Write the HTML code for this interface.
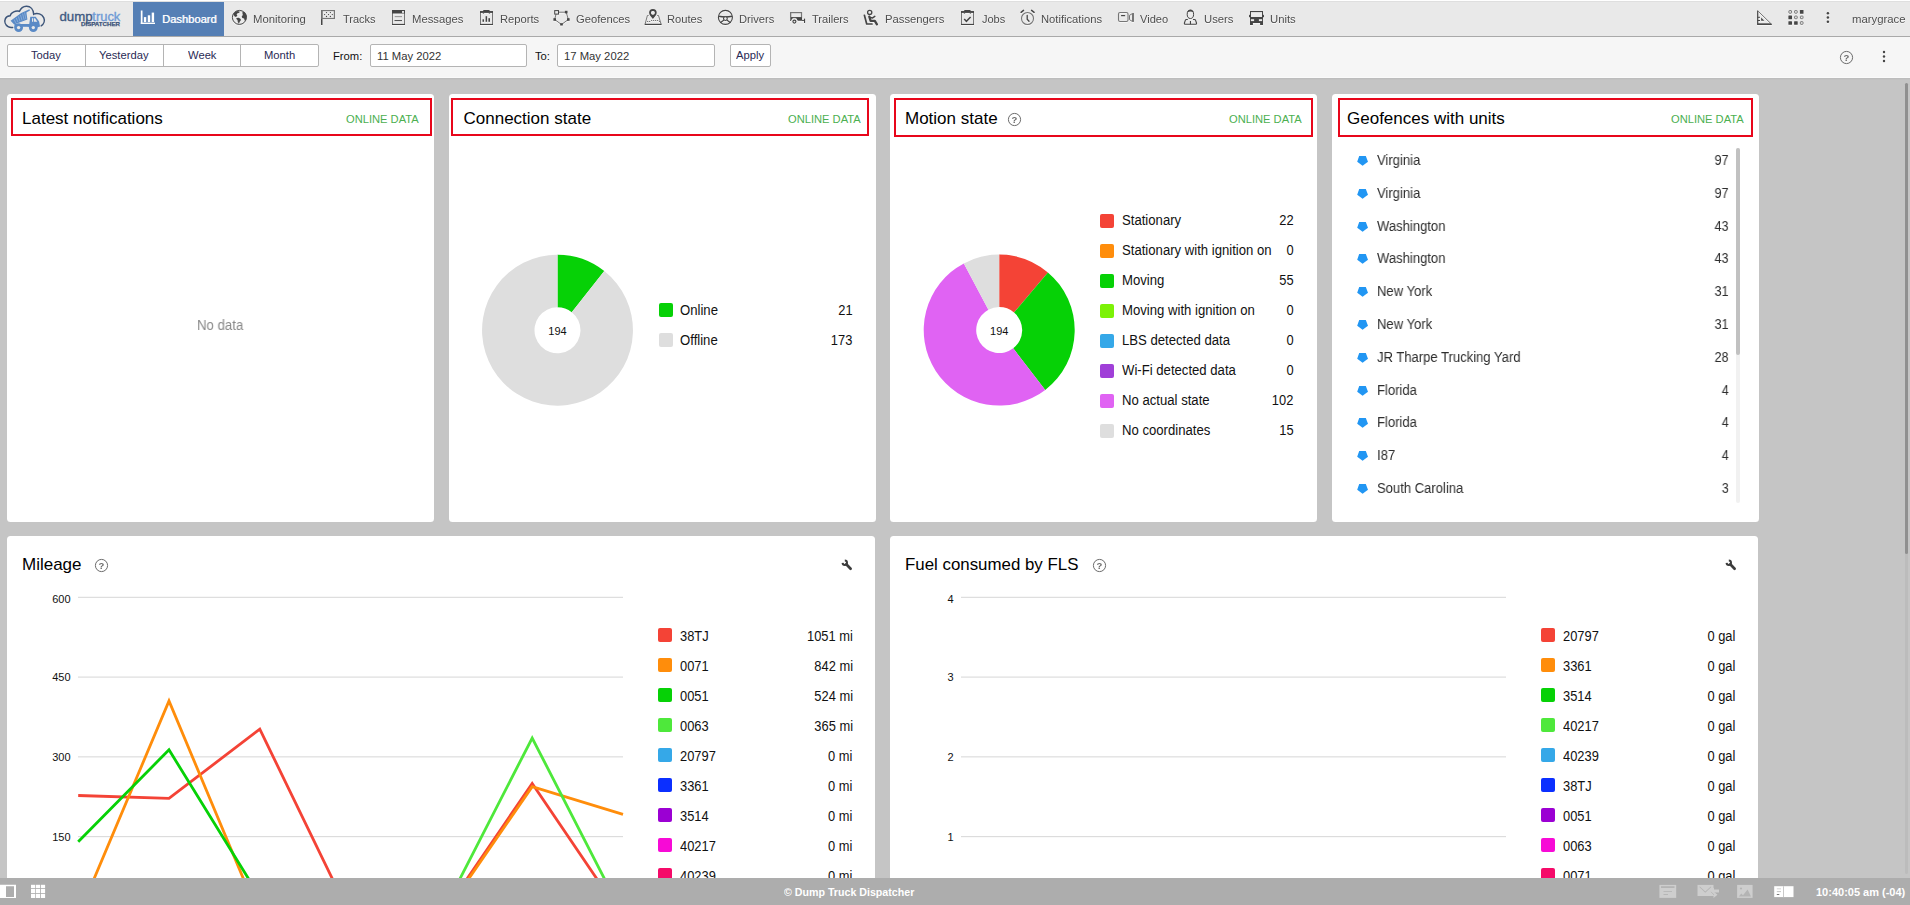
<!DOCTYPE html>
<html lang="en">
<head>
<meta charset="utf-8">
<title>Dump Truck Dispatcher</title>
<style>
html,body,h2{margin:0;padding:0}
h2{font-weight:normal}
body{width:1910px;height:905px;overflow:hidden;position:relative;background:#c5c5c5;font-family:"Liberation Sans",Arial,sans-serif}
#nav{position:absolute;left:0;top:0;width:1910px;height:36px;background:#e9e9e9;border-bottom:1px solid #a9a9a9;box-shadow:inset 0 1px 0 #fff,inset 0 2px 0 #dfdfdf}
#tb{position:absolute;left:0;top:37px;width:1910px;height:41px;background:#f6f6f6;box-shadow:inset 0 -1px 0 #fafafa}
#main{position:absolute;left:0;top:78px;width:1910px;height:800px;overflow:hidden;box-shadow:inset 0 1px 0 #bdbdbd,inset 0 2px 0 #c2c2c2}
#ft{position:absolute;left:0;top:878px;width:1910px;height:27px;background:#adadad}
#tb>*{margin-top:-37px}
#main>*{margin-top:-78px}
#ft>*{margin-top:-878px}
.b{position:absolute;display:block;box-sizing:border-box}
.t{position:absolute;white-space:nowrap;line-height:1;transform-origin:0 0}
.card{background:#fff;border-radius:3.5px}
.red{border:2px solid #e8061b}
.seg,.inp{background:#fff;border:1px solid #b4b4b4;border-radius:2px}
.sq{width:14px;height:14px;border-radius:2px}
svg text{font-family:"Liberation Sans",Arial,sans-serif}
</style>
</head>
<body>
<nav id="nav">
<svg class="b" style="left:0;top:0" width="130" height="36" viewBox="0 0 130 36"><path d="M12.700 27.400c-1.500.3-3.200.1-4.600-.8-2.900-1.800-3.900-5.300-2.700-8 .8-1.800 2.600-2.700 4.700-2.900 .9-3.300 5.600-5.500 9.400-4.400 1.200-3 3.800-5 6.900-5.100 4.200-.1 7 3.300 7.300 8 3.600-1.900 8.300 0 10 3.400 1.400 2.900.3 6.300-2.500 8.200" fill="none" stroke="#3d5579" stroke-width="1.500" stroke-linecap="round"/><g fill="#5a8ac6"><path d="M10.600 20.800l10.600-7.900 8.200-3.600.6 1.300-3.600 1.900 1 7-13.300 5.100z"/><path d="M30.300 16.800h5.400l3.400 4.700 1 5-2.200.8h-7.200l-3.800-1.300 2.200-1z"/><path d="M14.500 24h16.500v2.800h-16.500z"/><circle cx="18.600" cy="27.600" r="4.400"/><circle cx="33.300" cy="27.600" r="4.400"/></g><g fill="#e9e9e9"><circle cx="18.600" cy="27.600" r="1.700"/><circle cx="33.300" cy="27.600" r="1.700"/><path d="M32 18.200h1.100v3.500h-1.100zM33.900 18.200h1.100l2.300 3.500h-3.400z"/><path d="M19.300 23.600l7.300-2.300.1 2.500z" opacity=".85"/></g><g stroke="#a9c4e6" stroke-width=".7" opacity=".8"><path d="M14.200 19.500l1.500 3.300M16.300 18l1.600 4.100M18.400 16.500l1.600 4.800M20.500 15l1.600 5.500M22.600 13.600l1.500 6.100M24.600 12.600l1.300 6.500"/></g><text x="59.400" y="20.700" font-size="13" fill="#3f5a82" stroke="#3f5a82" stroke-width=".35" textLength="33.200" lengthAdjust="spacingAndGlyphs">dump</text><text x="92.300" y="20.700" font-size="13" fill="#6f9bd6" stroke="#6f9bd6" stroke-width=".35" textLength="28" lengthAdjust="spacingAndGlyphs">truck</text><text x="81" y="26.250" font-size="5.700" font-weight="bold" fill="#3b5278" stroke="#3b5278" stroke-width=".25" textLength="39" lengthAdjust="spacingAndGlyphs">DISPATCHER</text></svg>
<div class="b" style="left:133px;top:2px;width:91px;height:34px;background:#557fb5;"></div>
<svg class="b" style="left:0;top:0" width="1910" height="36" viewBox="0 0 1910 36"><g fill="#fff"><rect x="140.800" y="10.500" width="1.700" height="13.500"/><rect x="140.800" y="22.600" width="14.200" height="1.400"/><rect x="143.900" y="17.100" width="2.300" height="5"/><rect x="147.800" y="15.300" width="2.400" height="6.800"/><rect x="151.700" y="12.600" width="2.400" height="9.500"/></g><g transform="translate(0 1)" opacity=".6"><circle cx="239.400" cy="17.400" r="7" fill="none" stroke="#fff" stroke-width="1"/><path fill="#fff" d="M233.300 14.600c.8-1.800 2.200-3 3.700-3.600l2.700.6-.4 1.200-1.800.4-1 1.400.9.700-1.300 1.600-1.400-.3-.8-1.300zM236.400 18l2.300-.3 1.700 1 .6 1.300-1.300 1.700-.7 2-1.200-1.700-.3-1.900-1.100-1.100zM242.300 12.300l1.700-.6c1.500 1 2.500 2.600 2.800 4.500l-.6 3.400-1.500 1.100-.6-2.300-1.800-.3-.6-1.700 1.100-1.500z"/><rect x="321" y="10" width="1.500" height="15" fill="#fff"/><rect x="321.700" y="10.600" width="12.700" height="7.900" fill="none" stroke="#fff" stroke-width="1.200"/><g fill="#fff"><circle cx="326.5" cy="12.6" r=".65"/><circle cx="330.4" cy="12.6" r=".65"/><circle cx="324.6" cy="14.6" r=".65"/><circle cx="328.5" cy="14.6" r=".65"/><circle cx="332.3" cy="14.6" r=".65"/><circle cx="326.5" cy="16.5" r=".65"/><circle cx="330.4" cy="16.5" r=".65"/></g><rect x="392.500" y="10.500" width="12" height="14" fill="none" stroke="#fff" stroke-width="1"/><rect x="392" y="10" width="13" height="3.500" fill="#fff"/><rect x="402" y="11.100" width="2" height="1.700" fill="#fff"/><rect x="392" y="23.900" width="13" height="1.100" fill="#fff"/><rect x="394.700" y="16.200" width="7.300" height="1" fill="#fff"/><rect x="394.500" y="20.100" width="7.500" height="1" fill="#fff"/><rect x="480.5" y="11.600" width="12" height="12.900" fill="none" stroke="#fff" stroke-width="1"/><rect x="480" y="11.100" width="13" height="1.800" fill="#fff"/><rect x="483.1" y="9.900" width="6.600" height="2.200" rx=".8" fill="#fff"/><path d="M482.4 12.900h2l-1 .8zM488.4 12.900h2l-1 .8z" fill="#fff"/><rect x="480" y="23.900" width="13" height="1.100" fill="#fff"/><g fill="#fff"><rect x="482.500" y="19.300" width="1.500" height="2.500"/><rect x="485.600" y="16.200" width="1.500" height="5.600"/><rect x="488.400" y="18.200" width="1.600" height="3.600"/></g><path d="M556.500 12.200H566.200L568.300 19.500 561.500 24.500 554.700 19.500Z" fill="none" stroke="#fff" stroke-width="1"/><rect x="554.700" y="10.600" width="3.800" height="3.500" fill="none" stroke="#fff" stroke-width="1"/><g fill="#fff"><rect x="564.900" y="10.800" width="2.600" height="2.600"/><rect x="553.400" y="18.200" width="2.600" height="2.600"/><rect x="567" y="18.200" width="2.600" height="2.600"/><rect x="560.200" y="23.200" width="2.600" height="2.300"/></g><path d="M648.600 15.500h-1.200l-2.400 9h16.200l-2.700-9h-1.300" fill="none" stroke="#fff" stroke-width="1"/><rect x="644.800" y="23.800" width="16.600" height="1.200" fill="#fff"/><path d="M647 21.500h3.200M651 20.500h7.300M659 21.500h1" stroke="#fff" stroke-width="1" stroke-dasharray="1.200 .8" fill="none"/><path fill="#fff" fill-rule="evenodd" d="M652.900 9a3.800 3.800 0 0 1 3.800 3.800c0 2.300-2.300 4.200-3.800 6.200-1.500-2-3.800-3.900-3.800-6.200A3.800 3.800 0 0 1 652.900 9zm0 1.900a1.900 1.900 0 1 0 0 3.800 1.900 1.900 0 0 0 0-3.800z"/><circle cx="652.900" cy="12.800" r="1.700" fill="none"/><circle cx="725.400" cy="17.400" r="7" fill="none" stroke="#fff" stroke-width="1.100"/><path d="M718.400 16.200c2.300.5 4.600.8 7 .8s4.700-.3 7-.8" fill="none" stroke="#fff" stroke-width="1.600"/><circle cx="725.400" cy="18.600" r="1.900" fill="none" stroke="#fff" stroke-width="1.100"/><path d="M724 20l-3.700 2.700M726.800 20l3.700 2.700" stroke="#fff" stroke-width="1.100" fill="none"/><rect x="790.600" y="12.600" width="10.900" height="5" fill="none" stroke="#fff" stroke-width="1.200"/><path fill="#fff" d="M790 17.200h12v3.500h-3.800c-.7 0-1-.6-1.300-1.400-.4-1-1.200-1.500-2.500-1.500s-2.200.6-2.700 1.600l-.7 1.400c-.3.500-1 .4-1-.2z"/><rect x="790" y="12" width="1.100" height="8.500" fill="#fff"/><circle cx="794.400" cy="21.600" r="1.500" fill="none" stroke="#fff" stroke-width="1.100"/><rect x="802" y="19.900" width="2.500" height="1" fill="#fff"/><rect x="804" y="18.600" width="1.100" height="4.300" rx=".5" fill="#fff"/><circle cx="869.700" cy="12.400" r="2.100" fill="none" stroke="#fff" stroke-width="1.300"/><path d="M864.400 15.300l2.300 8.700h5.300" fill="none" stroke="#fff" stroke-width="1.700" stroke-linecap="round" stroke-linejoin="round"/><path d="M869.300 16.600l1.300 4.200h4.200l2.100 3.500" fill="none" stroke="#fff" stroke-width="2.300" stroke-linecap="round" stroke-linejoin="round"/><path d="M870 17.400l2.700.5 2.100-1.500" fill="none" stroke="#fff" stroke-width="1.500" stroke-linecap="round" stroke-linejoin="round"/><rect x="961.5" y="11.600" width="12" height="12.900" fill="none" stroke="#fff" stroke-width="1"/><rect x="961" y="11.100" width="13" height="1.800" fill="#fff"/><rect x="964.1" y="9.900" width="6.600" height="2.200" rx=".8" fill="#fff"/><path d="M963.4 12.900h2l-1 .8zM969.4 12.900h2l-1 .8z" fill="#fff"/><rect x="961" y="23.900" width="13" height="1.100" fill="#fff"/><path d="M964.200 19l2.200 2.300 4.200-4.300" fill="none" stroke="#fff" stroke-width="1.500"/><circle cx="1027.500" cy="18.500" r="6" fill="none" stroke="#fff" stroke-width="1.100"/><path d="M1027.200 15.500v3.700l1.800 2" fill="none" stroke="#fff" stroke-width="1.300" stroke-linecap="round"/><path d="M1021.100 12.300l2.400-1.900M1031.600 10.400l2.500 1.900" stroke="#fff" stroke-width="1.500" stroke-linecap="round" fill="none"/><rect x="1118.500" y="12.500" width="9.500" height="9" rx="1.600" fill="none" stroke="#fff" stroke-width="1.100"/><rect x="1121" y="15" width="4.200" height="1.300" rx=".5" fill="#fff"/><path d="M1129.500 15.300l3-1.800v8l-3-1.800z" fill="none" stroke="#fff" stroke-width="1"/><rect x="1132.300" y="13" width="1.700" height="8.900" fill="#fff"/><ellipse cx="1190.400" cy="14.300" rx="3.200" ry="4.200" fill="none" stroke="#fff" stroke-width="1"/><path d="M1187.300 12.500c.3-1.800 1.500-2.700 3.100-2.700s2.800.9 3.100 2.700c-1-.8-2-1.100-3.100-1.100s-2.100.3-3.100 1.100z" fill="#fff"/><path d="M1187.800 19.500h-1.400c-.6 0-.9.300-1.100.9l-.9 2.600c-.2.700.2 1.200.9 1.200h10.300c.7 0 1.100-.5.900-1.200l-.9-2.600c-.2-.6-.5-.9-1.100-.9h-1.500" fill="none" stroke="#fff" stroke-width="1.100"/><rect x="1189.900" y="21" width="1.100" height="3.200" fill="#fff"/><path fill="#fff" d="M1250 11h13v12h-13z"/><rect x="1251" y="12.100" width="11" height="4.900" fill="none"/><rect x="1250.900" y="19.200" width="3.200" height="1.900" fill="none"/><rect x="1258.900" y="19.200" width="3.200" height="1.900" fill="none"/><rect x="1250" y="22.500" width="2.900" height="2.500" fill="#fff"/><rect x="1260.100" y="22.500" width="2.900" height="2.500" fill="#fff"/><rect x="1249" y="14.700" width="1.200" height="2.500" rx=".5" fill="#fff"/><rect x="1262.800" y="14.700" width="1.200" height="2.500" rx=".5" fill="#fff"/><path d="M1757.700 10.800V24.100H1771" fill="none" stroke="#fff" stroke-width="1.200"/><path d="M1757.500 10.600L1771.600 24.300" fill="none" stroke="#fff" stroke-width="1"/><rect x="1757.200" y="23.700" width="14.600" height="1.200" fill="#fff"/><path d="M1757.500 17.300h2.500M1757.500 20.500h2.500" stroke="#fff" stroke-width="1" fill="none"/><path d="M1761.100 17.600v3.100h3.200z" fill="#fff"/><rect x="1788.9" y="10.6" width="2.600" height="2.600" rx=".5" fill="none" stroke="#fff" stroke-width="1"/><rect x="1794.6" y="10.6" width="2.600" height="2.600" rx=".5" fill="none" stroke="#fff" stroke-width="1"/><rect x="1799.9" y="10.1" width="3.600" height="3.600" rx=".5" fill="#fff"/><rect x="1788.4" y="15.6" width="3.600" height="3.600" rx=".5" fill="#fff"/><rect x="1794.6" y="16.1" width="2.600" height="2.600" rx=".5" fill="none" stroke="#fff" stroke-width="1"/><rect x="1800.4" y="16.1" width="2.600" height="2.600" rx=".5" fill="none" stroke="#fff" stroke-width="1"/><rect x="1788.4" y="21.2" width="3.600" height="3.600" rx=".5" fill="#fff"/><rect x="1794.1" y="21.2" width="3.600" height="3.600" rx=".5" fill="#fff"/><rect x="1800.4" y="21.7" width="2.600" height="2.600" rx=".5" fill="none" stroke="#fff" stroke-width="1"/><circle cx="1827.900" cy="13.2" r="1.250" fill="#fff"/><circle cx="1827.900" cy="17.4" r="1.250" fill="#fff"/><circle cx="1827.900" cy="21.7" r="1.250" fill="#fff"/></g><circle cx="239.400" cy="17.400" r="7" fill="#ebebeb" stroke="#454545" stroke-width="1"/><path fill="#454545" d="M233.300 14.600c.8-1.800 2.200-3 3.700-3.600l2.700.6-.4 1.200-1.800.4-1 1.400.9.700-1.300 1.600-1.400-.3-.8-1.300zM236.400 18l2.300-.3 1.700 1 .6 1.300-1.300 1.700-.7 2-1.200-1.700-.3-1.900-1.100-1.100zM242.300 12.300l1.700-.6c1.500 1 2.500 2.600 2.800 4.500l-.6 3.400-1.500 1.100-.6-2.300-1.800-.3-.6-1.700 1.100-1.500z"/><rect x="321" y="10" width="1.500" height="15" fill="#454545"/><rect x="321.700" y="10.600" width="12.700" height="7.900" fill="none" stroke="#767676" stroke-width="1.200"/><g fill="#454545"><circle cx="326.5" cy="12.6" r=".65"/><circle cx="330.4" cy="12.6" r=".65"/><circle cx="324.6" cy="14.6" r=".65"/><circle cx="328.5" cy="14.6" r=".65"/><circle cx="332.3" cy="14.6" r=".65"/><circle cx="326.5" cy="16.5" r=".65"/><circle cx="330.4" cy="16.5" r=".65"/></g><rect x="392.500" y="10.500" width="12" height="14" fill="none" stroke="#767676" stroke-width="1"/><rect x="392" y="10" width="13" height="3.500" fill="#454545"/><rect x="402" y="11.100" width="2" height="1.700" fill="#f4f4f4"/><rect x="392" y="23.900" width="13" height="1.100" fill="#454545"/><rect x="394.700" y="16.200" width="7.300" height="1" fill="#8a8a8a"/><rect x="394.500" y="20.100" width="7.500" height="1" fill="#454545"/><rect x="480.5" y="11.600" width="12" height="12.900" fill="none" stroke="#767676" stroke-width="1"/><rect x="480" y="11.100" width="13" height="1.800" fill="#454545"/><rect x="483.1" y="9.900" width="6.600" height="2.200" rx=".8" fill="#454545"/><path d="M482.4 12.900h2l-1 .8zM488.4 12.900h2l-1 .8z" fill="#454545"/><rect x="480" y="23.900" width="13" height="1.100" fill="#454545"/><g fill="#454545"><rect x="482.500" y="19.300" width="1.500" height="2.500"/><rect x="485.600" y="16.200" width="1.500" height="5.600"/><rect x="488.400" y="18.200" width="1.600" height="3.600"/></g><path d="M556.500 12.200H566.200L568.300 19.500 561.500 24.500 554.700 19.500Z" fill="none" stroke="#767676" stroke-width="1"/><rect x="554.700" y="10.600" width="3.800" height="3.500" fill="#ebebeb" stroke="#454545" stroke-width="1"/><g fill="#454545"><rect x="564.900" y="10.800" width="2.600" height="2.600"/><rect x="553.400" y="18.200" width="2.600" height="2.600"/><rect x="567" y="18.200" width="2.600" height="2.600"/><rect x="560.200" y="23.200" width="2.600" height="2.300"/></g><path d="M648.600 15.500h-1.200l-2.400 9h16.200l-2.700-9h-1.300" fill="none" stroke="#767676" stroke-width="1"/><rect x="644.800" y="23.800" width="16.600" height="1.200" fill="#454545"/><path d="M647 21.500h3.200M651 20.500h7.300M659 21.500h1" stroke="#767676" stroke-width="1" stroke-dasharray="1.200 .8" fill="none"/><path fill="#454545" fill-rule="evenodd" d="M652.900 9a3.800 3.800 0 0 1 3.800 3.800c0 2.300-2.300 4.200-3.800 6.200-1.500-2-3.800-3.900-3.800-6.200A3.800 3.800 0 0 1 652.900 9zm0 1.900a1.900 1.900 0 1 0 0 3.800 1.900 1.900 0 0 0 0-3.800z"/><circle cx="652.900" cy="12.800" r="1.700" fill="#ebebeb"/><circle cx="725.400" cy="17.400" r="7" fill="none" stroke="#454545" stroke-width="1.100"/><path d="M718.400 16.200c2.300.5 4.600.8 7 .8s4.700-.3 7-.8" fill="none" stroke="#454545" stroke-width="1.600"/><circle cx="725.400" cy="18.600" r="1.900" fill="#ebebeb" stroke="#454545" stroke-width="1.100"/><path d="M724 20l-3.700 2.700M726.800 20l3.700 2.700" stroke="#454545" stroke-width="1.100" fill="none"/><rect x="790.600" y="12.600" width="10.900" height="5" fill="#ebebeb" stroke="#767676" stroke-width="1.200"/><path fill="#454545" d="M790 17.200h12v3.500h-3.800c-.7 0-1-.6-1.300-1.400-.4-1-1.200-1.500-2.500-1.500s-2.200.6-2.700 1.600l-.7 1.400c-.3.500-1 .4-1-.2z"/><rect x="790" y="12" width="1.100" height="8.500" fill="#767676"/><circle cx="794.400" cy="21.600" r="1.500" fill="#ebebeb" stroke="#454545" stroke-width="1.100"/><rect x="802" y="19.900" width="2.500" height="1" fill="#454545"/><rect x="804" y="18.600" width="1.100" height="4.300" rx=".5" fill="#454545"/><circle cx="869.700" cy="12.400" r="2.100" fill="#ebebeb" stroke="#454545" stroke-width="1.300"/><path d="M864.400 15.300l2.300 8.700h5.300" fill="none" stroke="#454545" stroke-width="1.700" stroke-linecap="round" stroke-linejoin="round"/><path d="M869.300 16.600l1.300 4.200h4.200l2.100 3.500" fill="none" stroke="#454545" stroke-width="2.300" stroke-linecap="round" stroke-linejoin="round"/><path d="M870 17.400l2.700.5 2.100-1.500" fill="none" stroke="#454545" stroke-width="1.500" stroke-linecap="round" stroke-linejoin="round"/><rect x="961.5" y="11.600" width="12" height="12.900" fill="none" stroke="#767676" stroke-width="1"/><rect x="961" y="11.100" width="13" height="1.800" fill="#454545"/><rect x="964.1" y="9.900" width="6.600" height="2.200" rx=".8" fill="#454545"/><path d="M963.4 12.900h2l-1 .8zM969.4 12.900h2l-1 .8z" fill="#454545"/><rect x="961" y="23.900" width="13" height="1.100" fill="#454545"/><path d="M964.200 19l2.200 2.300 4.200-4.300" fill="none" stroke="#454545" stroke-width="1.500"/><circle cx="1027.500" cy="18.500" r="6" fill="none" stroke="#767676" stroke-width="1.100"/><path d="M1027.200 15.500v3.700l1.800 2" fill="none" stroke="#454545" stroke-width="1.300" stroke-linecap="round"/><path d="M1021.100 12.300l2.400-1.900M1031.600 10.400l2.500 1.900" stroke="#454545" stroke-width="1.500" stroke-linecap="round" fill="none"/><rect x="1118.500" y="12.500" width="9.500" height="9" rx="1.600" fill="none" stroke="#767676" stroke-width="1.100"/><rect x="1121" y="15" width="4.200" height="1.300" rx=".5" fill="#454545"/><path d="M1129.500 15.300l3-1.800v8l-3-1.800z" fill="#ebebeb" stroke="#767676" stroke-width="1"/><rect x="1132.300" y="13" width="1.700" height="8.900" fill="#767676"/><ellipse cx="1190.400" cy="14.300" rx="3.200" ry="4.200" fill="#ebebeb" stroke="#454545" stroke-width="1"/><path d="M1187.300 12.500c.3-1.800 1.500-2.700 3.100-2.700s2.800.9 3.100 2.700c-1-.8-2-1.100-3.100-1.100s-2.100.3-3.100 1.100z" fill="#454545"/><path d="M1187.800 19.500h-1.400c-.6 0-.9.300-1.100.9l-.9 2.600c-.2.700.2 1.200.9 1.200h10.300c.7 0 1.100-.5.900-1.200l-.9-2.600c-.2-.6-.5-.9-1.100-.9h-1.500" fill="#ebebeb" stroke="#454545" stroke-width="1.100"/><rect x="1189.900" y="21" width="1.100" height="3.200" fill="#454545"/><path fill="#454545" d="M1250 11h13v12h-13z"/><rect x="1251" y="12.100" width="11" height="4.900" fill="#ebebeb"/><rect x="1250.900" y="19.200" width="3.200" height="1.900" fill="#ebebeb"/><rect x="1258.900" y="19.200" width="3.200" height="1.900" fill="#ebebeb"/><rect x="1250" y="22.500" width="2.900" height="2.500" fill="#454545"/><rect x="1260.100" y="22.500" width="2.900" height="2.500" fill="#454545"/><rect x="1249" y="14.700" width="1.200" height="2.500" rx=".5" fill="#454545"/><rect x="1262.800" y="14.700" width="1.200" height="2.500" rx=".5" fill="#454545"/><path d="M1757.700 10.800V24.100H1771" fill="none" stroke="#454545" stroke-width="1.200"/><path d="M1757.500 10.600L1771.600 24.300" fill="none" stroke="#767676" stroke-width="1"/><rect x="1757.200" y="23.700" width="14.600" height="1.200" fill="#454545"/><path d="M1757.500 17.300h2.500M1757.500 20.500h2.500" stroke="#454545" stroke-width="1" fill="none"/><path d="M1761.100 17.600v3.100h3.200z" fill="#454545"/><rect x="1788.9" y="10.6" width="2.600" height="2.600" rx=".5" fill="#ebebeb" stroke="#767676" stroke-width="1"/><rect x="1794.6" y="10.6" width="2.600" height="2.600" rx=".5" fill="#ebebeb" stroke="#767676" stroke-width="1"/><rect x="1799.9" y="10.1" width="3.600" height="3.600" rx=".5" fill="#454545"/><rect x="1788.4" y="15.6" width="3.600" height="3.600" rx=".5" fill="#454545"/><rect x="1794.6" y="16.1" width="2.600" height="2.600" rx=".5" fill="#ebebeb" stroke="#767676" stroke-width="1"/><rect x="1800.4" y="16.1" width="2.600" height="2.600" rx=".5" fill="#ebebeb" stroke="#767676" stroke-width="1"/><rect x="1788.4" y="21.2" width="3.600" height="3.600" rx=".5" fill="#454545"/><rect x="1794.1" y="21.2" width="3.600" height="3.600" rx=".5" fill="#454545"/><rect x="1800.4" y="21.7" width="2.600" height="2.600" rx=".5" fill="#ebebeb" stroke="#767676" stroke-width="1"/><circle cx="1827.900" cy="13.2" r="1.250" fill="#454545"/><circle cx="1827.900" cy="17.4" r="1.250" fill="#454545"/><circle cx="1827.900" cy="21.7" r="1.250" fill="#454545"/></svg>
<a class="t" style="top:14px;font-size:11px;color:#fff;left:161.81px;transform:scaleX(1.0124);text-shadow:.6px 0 0 rgba(255,255,255,.75);">Dashboard</a>
<a class="t" style="top:14px;font-size:11px;color:#4e4e4e;left:253.1px;transform:scaleX(1.0271);will-change:transform;text-shadow:0 1px 0 rgba(255,255,255,.7);">Monitoring</a>
<a class="t" style="top:14px;font-size:11px;color:#4e4e4e;left:342.95px;transform:scaleX(1.0000);will-change:transform;text-shadow:0 1px 0 rgba(255,255,255,.7);">Tracks</a>
<a class="t" style="top:14px;font-size:11px;color:#4e4e4e;left:412px;transform:scaleX(1.0251);will-change:transform;text-shadow:0 1px 0 rgba(255,255,255,.7);">Messages</a>
<a class="t" style="top:14px;font-size:11px;color:#4e4e4e;left:500.11px;transform:scaleX(1.0174);will-change:transform;text-shadow:0 1px 0 rgba(255,255,255,.7);">Reports</a>
<a class="t" style="top:14px;font-size:11px;color:#4e4e4e;left:576.49px;transform:scaleX(1.0163);will-change:transform;text-shadow:0 1px 0 rgba(255,255,255,.7);">Geofences</a>
<a class="t" style="top:14px;font-size:11px;color:#4e4e4e;left:667.01px;transform:scaleX(1.0141);will-change:transform;text-shadow:0 1px 0 rgba(255,255,255,.7);">Routes</a>
<a class="t" style="top:14px;font-size:11px;color:#4e4e4e;left:739.21px;transform:scaleX(1.0141);will-change:transform;text-shadow:0 1px 0 rgba(255,255,255,.7);">Drivers</a>
<a class="t" style="top:14px;font-size:11px;color:#4e4e4e;left:811.85px;transform:scaleX(1.0077);will-change:transform;text-shadow:0 1px 0 rgba(255,255,255,.7);">Trailers</a>
<a class="t" style="top:14px;font-size:11px;color:#4e4e4e;left:885px;transform:scaleX(1.0233);will-change:transform;text-shadow:0 1px 0 rgba(255,255,255,.7);">Passengers</a>
<a class="t" style="top:14px;font-size:11px;color:#4e4e4e;left:981.65px;transform:scaleX(1.0000);will-change:transform;text-shadow:0 1px 0 rgba(255,255,255,.7);">Jobs</a>
<a class="t" style="top:14px;font-size:11px;color:#4e4e4e;left:1041.21px;transform:scaleX(1.0183);will-change:transform;text-shadow:0 1px 0 rgba(255,255,255,.7);">Notifications</a>
<a class="t" style="top:14px;font-size:11px;color:#4e4e4e;left:1139.87px;transform:scaleX(1.0082);will-change:transform;text-shadow:0 1px 0 rgba(255,255,255,.7);">Video</a>
<a class="t" style="top:14px;font-size:11px;color:#4e4e4e;left:1204.2px;transform:scaleX(1.0255);will-change:transform;text-shadow:0 1px 0 rgba(255,255,255,.7);">Users</a>
<a class="t" style="top:14px;font-size:11px;color:#4e4e4e;left:1270.4px;transform:scaleX(1.0274);will-change:transform;text-shadow:0 1px 0 rgba(255,255,255,.7);">Units</a>
<span class="t" style="top:14px;font-size:11px;color:#4e4e4e;left:1851.53px;transform:scaleX(1.0300);will-change:transform;text-shadow:0 1px 0 rgba(255,255,255,.7);">marygrace</span>
</nav>
<div id="tb">
<div class="b seg" style="left:7px;top:44px;width:312px;height:23px"></div>
<div class="b" style="left:85px;top:45px;width:1px;height:21px;background:#b4b4b4;"></div>
<div class="b" style="left:163px;top:45px;width:1px;height:21px;background:#b4b4b4;"></div>
<div class="b" style="left:240px;top:45px;width:1px;height:21px;background:#b4b4b4;"></div>
<span class="t" style="top:50px;font-size:11px;color:#2a2a55;left:31.33px;transform:scaleX(1.0200);">Today</span>
<span class="t" style="top:50px;font-size:11px;color:#2a2a55;left:99.46px;transform:scaleX(1.0200);">Yesterday</span>
<span class="t" style="top:50px;font-size:11px;color:#2a2a55;left:187.76px;transform:scaleX(1.0200);">Week</span>
<span class="t" style="top:50px;font-size:11px;color:#2a2a55;left:264.21px;transform:scaleX(1.0200);">Month</span>
<span class="t" style="top:51px;font-size:11px;color:#111;left:333.4px;transform:scaleX(1.0200);">From:</span>
<div class="b inp" style="left:370px;top:44px;width:157px;height:23px"></div>
<span class="t" style="top:51px;font-size:11px;color:#333;left:377px;transform:scaleX(1.0250);">11 May 2022</span>
<span class="t" style="top:51px;font-size:11px;color:#111;left:535.2px;transform:scaleX(1.0200);">To:</span>
<div class="b inp" style="left:557px;top:44px;width:158px;height:23px"></div>
<span class="t" style="top:51px;font-size:11px;color:#333;left:564.2px;transform:scaleX(1.0250);">17 May 2022</span>
<div class="b inp" style="left:730px;top:44px;width:41px;height:23px"></div>
<span class="t" style="top:50px;font-size:11px;color:#2a2a55;left:736.3px;transform:scaleX(1.0200);">Apply</span>
<svg class="b" style="left:1839px;top:50px;will-change:transform" width="15" height="15" viewBox="0 0 15 15"><circle cx="7.500" cy="7.500" r="6.100" fill="none" stroke="#6a6a6a" stroke-width="1"/><text x="7.500" y="10.900" text-anchor="middle" font-size="9.500" font-weight="bold" fill="#6a6a6a">?</text></svg>
<svg class="b" style="left:1880px;top:48px" width="8" height="18" viewBox="0 0 8 18"><circle cx="4" cy="4" r="1.200" fill="#444"/><circle cx="4" cy="8.500" r="1.200" fill="#444"/><circle cx="4" cy="13" r="1.200" fill="#444"/></svg>
</div>
<main id="main">
<div class="b card" style="left:7px;top:94px;width:427px;height:428px"></div>
<div class="b red" style="left:11px;top:98px;width:421px;height:38px"></div>
<h2 class="t" style="top:110px;font-size:17px;color:#000;left:22px;">Latest notifications</h2>
<span class="t" style="top:114px;font-size:11px;color:#4caf50;right:1491.3px;transform-origin:100% 0;transform:scaleX(1.0140);">ONLINE DATA</span>
<div class="b card" style="left:448.5px;top:94px;width:427.1px;height:428px"></div>
<div class="b red" style="left:451px;top:98px;width:418px;height:38px"></div>
<h2 class="t" style="top:110px;font-size:17px;color:#000;left:463.5px;">Connection state</h2>
<span class="t" style="top:114px;font-size:11px;color:#4caf50;right:1049.7px;transform-origin:100% 0;transform:scaleX(1.0140);">ONLINE DATA</span>
<div class="b card" style="left:890px;top:94px;width:426.7px;height:428px"></div>
<div class="b red" style="left:894px;top:98px;width:419px;height:39px"></div>
<h2 class="t" style="top:110px;font-size:17px;color:#000;left:905px;">Motion state</h2>
<span class="t" style="top:114px;font-size:11px;color:#4caf50;right:608.6px;transform-origin:100% 0;transform:scaleX(1.0140);">ONLINE DATA</span>
<div class="b card" style="left:1332px;top:94px;width:427px;height:428px"></div>
<div class="b red" style="left:1338px;top:98px;width:415px;height:39px"></div>
<h2 class="t" style="top:110px;font-size:17px;color:#000;left:1347px;">Geofences with units</h2>
<span class="t" style="top:114px;font-size:11px;color:#4caf50;right:166.3px;transform-origin:100% 0;transform:scaleX(1.0140);">ONLINE DATA</span>
<span class="t" style="top:318px;font-size:14px;color:#8a8a8a;left:197px;transform:scaleX(0.9450);will-change:transform;">No data</span>
<svg class="b" style="left:1007px;top:112px;will-change:transform" width="15" height="15" viewBox="0 0 15 15"><circle cx="7.500" cy="7.500" r="6.100" fill="none" stroke="#6a6a6a" stroke-width="1"/><text x="7.500" y="10.900" text-anchor="middle" font-size="9.500" font-weight="bold" fill="#6a6a6a">?</text></svg>
<svg class="b" style="left:481px;top:253px" width="154" height="154" viewBox="-76.5 -77.2 154 154"><path fill="#06d106" d="M0 -75.45 A75.45 75.45 0 0 1 46.78 -59.2 L14.26 -18.04 A23 23 0 0 0 0 -23 Z"/><path fill="#dedede" d="M46.78 -59.2 A75.45 75.45 0 1 1 0 -75.45 L0 -23 A23 23 0 1 0 14.26 -18.04 Z"/><text x="0" y="5" text-anchor="middle" font-size="11" fill="#111">194</text></svg>
<svg class="b" style="left:922px;top:253px" width="155" height="155" viewBox="-77.2 -77.1 155 155"><path fill="#f44336" d="M0 -75.5 A75.5 75.5 0 0 1 48.71 -57.69 L14.84 -17.57 A23 23 0 0 0 0 -23 Z"/><path fill="#06d106" d="M48.71 -57.69 A75.5 75.5 0 0 1 46.04 59.84 L14.03 18.23 A23 23 0 0 0 14.84 -17.57 Z"/><path fill="#e063f3" d="M46.04 59.84 A75.5 75.5 0 1 1 -35.36 -66.71 L-10.77 -20.32 A23 23 0 1 0 14.03 18.23 Z"/><path fill="#dedede" d="M-35.36 -66.71 A75.5 75.5 0 0 1 0 -75.5 L0 -23 A23 23 0 0 0 -10.77 -20.32 Z"/><text x="0" y="5" text-anchor="middle" font-size="11" fill="#111">194</text></svg>
<div class="b sq" style="left:658.5px;top:303px;background:#06d106"></div>
<span class="t" style="top:303px;font-size:14px;color:#111;left:680.3px;transform:scaleX(0.9380);">Online</span>
<span class="t" style="top:303px;font-size:14px;color:#111;right:1057.8px;transform-origin:100% 0;transform:scaleX(0.9200);">21</span>
<div class="b sq" style="left:658.5px;top:333px;background:#dedede"></div>
<span class="t" style="top:333px;font-size:14px;color:#111;left:680.3px;transform:scaleX(0.9380);">Offline</span>
<span class="t" style="top:333px;font-size:14px;color:#111;right:1057.8px;transform-origin:100% 0;transform:scaleX(0.9200);">173</span>
<div class="b sq" style="left:1100px;top:214px;background:#f44336"></div>
<span class="t" style="top:213px;font-size:14px;color:#111;left:1121.8px;transform:scaleX(0.9380);">Stationary</span>
<span class="t" style="top:213px;font-size:14px;color:#111;right:616.4px;transform-origin:100% 0;transform:scaleX(0.9200);">22</span>
<div class="b sq" style="left:1100px;top:244px;background:#ff8d0b"></div>
<span class="t" style="top:243px;font-size:14px;color:#111;left:1121.8px;transform:scaleX(0.9380);">Stationary with ignition on</span>
<span class="t" style="top:243px;font-size:14px;color:#111;right:616.4px;transform-origin:100% 0;transform:scaleX(0.9200);">0</span>
<div class="b sq" style="left:1100px;top:274px;background:#06d106"></div>
<span class="t" style="top:273px;font-size:14px;color:#111;left:1121.8px;transform:scaleX(0.9380);">Moving</span>
<span class="t" style="top:273px;font-size:14px;color:#111;right:616.4px;transform-origin:100% 0;transform:scaleX(0.9200);">55</span>
<div class="b sq" style="left:1100px;top:304px;background:#7cf207"></div>
<span class="t" style="top:303px;font-size:14px;color:#111;left:1121.8px;transform:scaleX(0.9380);">Moving with ignition on</span>
<span class="t" style="top:303px;font-size:14px;color:#111;right:616.4px;transform-origin:100% 0;transform:scaleX(0.9200);">0</span>
<div class="b sq" style="left:1100px;top:334px;background:#35a8e8"></div>
<span class="t" style="top:333px;font-size:14px;color:#111;left:1121.8px;transform:scaleX(0.9380);">LBS detected data</span>
<span class="t" style="top:333px;font-size:14px;color:#111;right:616.4px;transform-origin:100% 0;transform:scaleX(0.9200);">0</span>
<div class="b sq" style="left:1100px;top:364px;background:#a03fd8"></div>
<span class="t" style="top:363px;font-size:14px;color:#111;left:1121.8px;transform:scaleX(0.9380);">Wi-Fi detected data</span>
<span class="t" style="top:363px;font-size:14px;color:#111;right:616.4px;transform-origin:100% 0;transform:scaleX(0.9200);">0</span>
<div class="b sq" style="left:1100px;top:394px;background:#e063f3"></div>
<span class="t" style="top:393px;font-size:14px;color:#111;left:1121.8px;transform:scaleX(0.9380);">No actual state</span>
<span class="t" style="top:393px;font-size:14px;color:#111;right:616.4px;transform-origin:100% 0;transform:scaleX(0.9200);">102</span>
<div class="b sq" style="left:1100px;top:424px;background:#dedede"></div>
<span class="t" style="top:423px;font-size:14px;color:#111;left:1121.8px;transform:scaleX(0.9380);">No coordinates</span>
<span class="t" style="top:423px;font-size:14px;color:#111;right:616.4px;transform-origin:100% 0;transform:scaleX(0.9200);">15</span>
<svg class="b" style="left:1356px;top:154px" width="13" height="12" viewBox="0 0 13 12"><path fill="#2196f3" d="M3.2 1.900h6.600L12 7.700 6.600 11.700 1.200 7.700Z"/></svg>
<span class="t" style="top:153px;font-size:14px;color:#2e2e2e;left:1377px;transform:scaleX(0.9320);will-change:transform;">Virginia</span>
<span class="t" style="top:153px;font-size:14px;color:#2e2e2e;right:181.7px;transform-origin:100% 0;transform:scaleX(0.9000);will-change:transform;">97</span>
<svg class="b" style="left:1356px;top:187px" width="13" height="12" viewBox="0 0 13 12"><path fill="#2196f3" d="M3.2 1.900h6.600L12 7.700 6.600 11.700 1.200 7.700Z"/></svg>
<span class="t" style="top:186px;font-size:14px;color:#2e2e2e;left:1377px;transform:scaleX(0.9320);will-change:transform;">Virginia</span>
<span class="t" style="top:186px;font-size:14px;color:#2e2e2e;right:181.7px;transform-origin:100% 0;transform:scaleX(0.9000);will-change:transform;">97</span>
<svg class="b" style="left:1356px;top:220px" width="13" height="12" viewBox="0 0 13 12"><path fill="#2196f3" d="M3.2 1.900h6.600L12 7.700 6.600 11.700 1.200 7.700Z"/></svg>
<span class="t" style="top:219px;font-size:14px;color:#2e2e2e;left:1377px;transform:scaleX(0.9320);will-change:transform;">Washington</span>
<span class="t" style="top:219px;font-size:14px;color:#2e2e2e;right:181.7px;transform-origin:100% 0;transform:scaleX(0.9000);will-change:transform;">43</span>
<svg class="b" style="left:1356px;top:252px" width="13" height="12" viewBox="0 0 13 12"><path fill="#2196f3" d="M3.2 1.900h6.600L12 7.700 6.600 11.700 1.200 7.700Z"/></svg>
<span class="t" style="top:251px;font-size:14px;color:#2e2e2e;left:1377px;transform:scaleX(0.9320);will-change:transform;">Washington</span>
<span class="t" style="top:251px;font-size:14px;color:#2e2e2e;right:181.7px;transform-origin:100% 0;transform:scaleX(0.9000);will-change:transform;">43</span>
<svg class="b" style="left:1356px;top:285px" width="13" height="12" viewBox="0 0 13 12"><path fill="#2196f3" d="M3.2 1.900h6.600L12 7.700 6.600 11.700 1.200 7.700Z"/></svg>
<span class="t" style="top:284px;font-size:14px;color:#2e2e2e;left:1377px;transform:scaleX(0.9320);will-change:transform;">New York</span>
<span class="t" style="top:284px;font-size:14px;color:#2e2e2e;right:181.7px;transform-origin:100% 0;transform:scaleX(0.9000);will-change:transform;">31</span>
<svg class="b" style="left:1356px;top:318px" width="13" height="12" viewBox="0 0 13 12"><path fill="#2196f3" d="M3.2 1.900h6.600L12 7.700 6.600 11.700 1.200 7.700Z"/></svg>
<span class="t" style="top:317px;font-size:14px;color:#2e2e2e;left:1377px;transform:scaleX(0.9320);will-change:transform;">New York</span>
<span class="t" style="top:317px;font-size:14px;color:#2e2e2e;right:181.7px;transform-origin:100% 0;transform:scaleX(0.9000);will-change:transform;">31</span>
<svg class="b" style="left:1356px;top:351px" width="13" height="12" viewBox="0 0 13 12"><path fill="#2196f3" d="M3.2 1.900h6.600L12 7.700 6.600 11.700 1.200 7.700Z"/></svg>
<span class="t" style="top:350px;font-size:14px;color:#2e2e2e;left:1377px;transform:scaleX(0.9320);will-change:transform;">JR Tharpe Trucking Yard</span>
<span class="t" style="top:350px;font-size:14px;color:#2e2e2e;right:181.7px;transform-origin:100% 0;transform:scaleX(0.9000);will-change:transform;">28</span>
<svg class="b" style="left:1356px;top:384px" width="13" height="12" viewBox="0 0 13 12"><path fill="#2196f3" d="M3.2 1.900h6.600L12 7.700 6.600 11.700 1.200 7.700Z"/></svg>
<span class="t" style="top:383px;font-size:14px;color:#2e2e2e;left:1377px;transform:scaleX(0.9320);will-change:transform;">Florida</span>
<span class="t" style="top:383px;font-size:14px;color:#2e2e2e;right:181.7px;transform-origin:100% 0;transform:scaleX(0.9000);will-change:transform;">4</span>
<svg class="b" style="left:1356px;top:416px" width="13" height="12" viewBox="0 0 13 12"><path fill="#2196f3" d="M3.2 1.900h6.600L12 7.700 6.600 11.700 1.200 7.700Z"/></svg>
<span class="t" style="top:415px;font-size:14px;color:#2e2e2e;left:1377px;transform:scaleX(0.9320);will-change:transform;">Florida</span>
<span class="t" style="top:415px;font-size:14px;color:#2e2e2e;right:181.7px;transform-origin:100% 0;transform:scaleX(0.9000);will-change:transform;">4</span>
<svg class="b" style="left:1356px;top:449px" width="13" height="12" viewBox="0 0 13 12"><path fill="#2196f3" d="M3.2 1.900h6.600L12 7.700 6.600 11.700 1.200 7.700Z"/></svg>
<span class="t" style="top:448px;font-size:14px;color:#2e2e2e;left:1377px;transform:scaleX(0.9320);will-change:transform;">I87</span>
<span class="t" style="top:448px;font-size:14px;color:#2e2e2e;right:181.7px;transform-origin:100% 0;transform:scaleX(0.9000);will-change:transform;">4</span>
<svg class="b" style="left:1356px;top:482px" width="13" height="12" viewBox="0 0 13 12"><path fill="#2196f3" d="M3.2 1.900h6.600L12 7.700 6.600 11.700 1.200 7.700Z"/></svg>
<span class="t" style="top:481px;font-size:14px;color:#2e2e2e;left:1377px;transform:scaleX(0.9320);will-change:transform;">South Carolina</span>
<span class="t" style="top:481px;font-size:14px;color:#2e2e2e;right:181.7px;transform-origin:100% 0;transform:scaleX(0.9000);will-change:transform;">3</span>
<div class="b" style="left:1736px;top:148px;width:4px;height:355px;background:#f1f1f1;border-radius:2px"></div>
<div class="b" style="left:1736px;top:148px;width:4px;height:207px;background:#c1c1c1;border-radius:2px"></div>
<div class="b card" style="left:7px;top:535.800px;width:868.100px;height:400px"></div>
<div class="b card" style="left:889.800px;top:535.800px;width:868.200px;height:400px"></div>
<h2 class="t" style="top:556px;font-size:17px;color:#000;left:22px;">Mileage</h2>
<h2 class="t" style="top:556px;font-size:17px;color:#000;left:905px;transform:scaleX(0.9920);">Fuel consumed by FLS</h2>
<svg class="b" style="left:94px;top:558px;will-change:transform" width="15" height="15" viewBox="0 0 15 15"><circle cx="7.500" cy="7.500" r="6.100" fill="none" stroke="#6a6a6a" stroke-width="1"/><text x="7.500" y="10.900" text-anchor="middle" font-size="9.500" font-weight="bold" fill="#6a6a6a">?</text></svg>
<svg class="b" style="left:1092px;top:558px;will-change:transform" width="15" height="15" viewBox="0 0 15 15"><circle cx="7.500" cy="7.500" r="6.100" fill="none" stroke="#6a6a6a" stroke-width="1"/><text x="7.500" y="10.900" text-anchor="middle" font-size="9.500" font-weight="bold" fill="#6a6a6a">?</text></svg>
<svg class="b" style="left:840px;top:558px" width="14" height="14" viewBox="840 558 14 14"><path d="M842.600 562.900A2.200 2.200 0 1 0 844.800 560.600" fill="none" stroke="#3c3c3c" stroke-width="2"/><path d="M846.300 564.300L850.600 568.700" fill="none" stroke="#3c3c3c" stroke-width="2.700" stroke-linecap="round"/></svg>
<svg class="b" style="left:1723.7px;top:558px" width="14" height="14" viewBox="840 558 14 14"><path d="M842.600 562.900A2.200 2.200 0 1 0 844.800 560.600" fill="none" stroke="#3c3c3c" stroke-width="2"/><path d="M846.300 564.300L850.600 568.700" fill="none" stroke="#3c3c3c" stroke-width="2.700" stroke-linecap="round"/></svg>
<svg class="b" style="left:0;top:580px" width="1910" height="300" viewBox="0 580 1910 300"><rect x="78" y="596.8" width="545" height="1" fill="#d6d6d6"/><text x="70.5" y="603" text-anchor="end" font-size="11" fill="#111">600</text><rect x="78" y="676.58" width="545" height="1" fill="#d6d6d6"/><text x="70.5" y="681" text-anchor="end" font-size="11" fill="#111">450</text><rect x="78" y="756.37" width="545" height="1" fill="#d6d6d6"/><text x="70.5" y="761" text-anchor="end" font-size="11" fill="#111">300</text><rect x="78" y="836.15" width="545" height="1" fill="#d6d6d6"/><text x="70.5" y="841" text-anchor="end" font-size="11" fill="#111">150</text><polyline fill="none" stroke="#f44336" stroke-width="2.8" stroke-linejoin="miter" stroke-miterlimit="10" points="78.2,795.5 169,798.3 259.8,729.2 350.6,916.4 441.4,916.4 532.2,783.4 623,917.4"/><polyline fill="none" stroke="#ff8d0b" stroke-width="2.8" stroke-linejoin="miter" stroke-miterlimit="10" points="78.2,916.4 169,700.9 259.8,917.9 350.6,916.4 441.4,918.4 532.2,786.7 623,814.4"/><polyline fill="none" stroke="#06d106" stroke-width="2.8" stroke-linejoin="miter" stroke-miterlimit="10" points="78.2,841.7 169,749.8 259.8,897 350.6,916.4 441.4,916.4 532.2,916.4 623,916.4"/><polyline fill="none" stroke="#4ee83b" stroke-width="2.8" stroke-linejoin="miter" stroke-miterlimit="10" points="78.2,916.4 169,916.4 259.8,916.4 350.6,916.4 441.4,914.9 532.2,738 623,914.9"/></svg>
<svg class="b" style="left:0;top:580px" width="1910" height="300" viewBox="0 580 1910 300"><rect x="961" y="596.8" width="545" height="1" fill="#d6d6d6"/><text x="953.5" y="603" text-anchor="end" font-size="11" fill="#111">4</text><rect x="961" y="676.58" width="545" height="1" fill="#d6d6d6"/><text x="953.5" y="681" text-anchor="end" font-size="11" fill="#111">3</text><rect x="961" y="756.37" width="545" height="1" fill="#d6d6d6"/><text x="953.5" y="761" text-anchor="end" font-size="11" fill="#111">2</text><rect x="961" y="836.15" width="545" height="1" fill="#d6d6d6"/><text x="953.5" y="841" text-anchor="end" font-size="11" fill="#111">1</text></svg>
<div class="b sq" style="left:658px;top:628.4px;background:#f44336"></div>
<span class="t" style="top:629px;font-size:14px;color:#111;left:680px;transform:scaleX(0.9200);">38TJ</span>
<span class="t" style="top:629px;font-size:14px;color:#111;right:1057.3px;transform-origin:100% 0;transform:scaleX(0.9200);">1051 mi</span>
<div class="b sq" style="left:658px;top:658.4px;background:#ff8d0b"></div>
<span class="t" style="top:659px;font-size:14px;color:#111;left:680px;transform:scaleX(0.9200);">0071</span>
<span class="t" style="top:659px;font-size:14px;color:#111;right:1057.3px;transform-origin:100% 0;transform:scaleX(0.9200);">842 mi</span>
<div class="b sq" style="left:658px;top:688.4px;background:#06d106"></div>
<span class="t" style="top:689px;font-size:14px;color:#111;left:680px;transform:scaleX(0.9200);">0051</span>
<span class="t" style="top:689px;font-size:14px;color:#111;right:1057.3px;transform-origin:100% 0;transform:scaleX(0.9200);">524 mi</span>
<div class="b sq" style="left:658px;top:718.4px;background:#4ee83b"></div>
<span class="t" style="top:719px;font-size:14px;color:#111;left:680px;transform:scaleX(0.9200);">0063</span>
<span class="t" style="top:719px;font-size:14px;color:#111;right:1057.3px;transform-origin:100% 0;transform:scaleX(0.9200);">365 mi</span>
<div class="b sq" style="left:658px;top:748.4px;background:#35a8e8"></div>
<span class="t" style="top:749px;font-size:14px;color:#111;left:680px;transform:scaleX(0.9200);">20797</span>
<span class="t" style="top:749px;font-size:14px;color:#111;right:1057.3px;transform-origin:100% 0;transform:scaleX(0.9200);">0 mi</span>
<div class="b sq" style="left:658px;top:778.4px;background:#0b2fff"></div>
<span class="t" style="top:779px;font-size:14px;color:#111;left:680px;transform:scaleX(0.9200);">3361</span>
<span class="t" style="top:779px;font-size:14px;color:#111;right:1057.3px;transform-origin:100% 0;transform:scaleX(0.9200);">0 mi</span>
<div class="b sq" style="left:658px;top:808.4px;background:#9b00d3"></div>
<span class="t" style="top:809px;font-size:14px;color:#111;left:680px;transform:scaleX(0.9200);">3514</span>
<span class="t" style="top:809px;font-size:14px;color:#111;right:1057.3px;transform-origin:100% 0;transform:scaleX(0.9200);">0 mi</span>
<div class="b sq" style="left:658px;top:838.4px;background:#f70ad6"></div>
<span class="t" style="top:839px;font-size:14px;color:#111;left:680px;transform:scaleX(0.9200);">40217</span>
<span class="t" style="top:839px;font-size:14px;color:#111;right:1057.3px;transform-origin:100% 0;transform:scaleX(0.9200);">0 mi</span>
<div class="b sq" style="left:658px;top:868.4px;background:#f50a69"></div>
<span class="t" style="top:869px;font-size:14px;color:#111;left:680px;transform:scaleX(0.9200);">40239</span>
<span class="t" style="top:869px;font-size:14px;color:#111;right:1057.3px;transform-origin:100% 0;transform:scaleX(0.9200);">0 mi</span>
<div class="b sq" style="left:1541px;top:628.4px;background:#f44336"></div>
<span class="t" style="top:629px;font-size:14px;color:#111;left:1563px;transform:scaleX(0.9200);">20797</span>
<span class="t" style="top:629px;font-size:14px;color:#111;right:174.6px;transform-origin:100% 0;transform:scaleX(0.9200);">0 gal</span>
<div class="b sq" style="left:1541px;top:658.4px;background:#ff8d0b"></div>
<span class="t" style="top:659px;font-size:14px;color:#111;left:1563px;transform:scaleX(0.9200);">3361</span>
<span class="t" style="top:659px;font-size:14px;color:#111;right:174.6px;transform-origin:100% 0;transform:scaleX(0.9200);">0 gal</span>
<div class="b sq" style="left:1541px;top:688.4px;background:#06d106"></div>
<span class="t" style="top:689px;font-size:14px;color:#111;left:1563px;transform:scaleX(0.9200);">3514</span>
<span class="t" style="top:689px;font-size:14px;color:#111;right:174.6px;transform-origin:100% 0;transform:scaleX(0.9200);">0 gal</span>
<div class="b sq" style="left:1541px;top:718.4px;background:#4ee83b"></div>
<span class="t" style="top:719px;font-size:14px;color:#111;left:1563px;transform:scaleX(0.9200);">40217</span>
<span class="t" style="top:719px;font-size:14px;color:#111;right:174.6px;transform-origin:100% 0;transform:scaleX(0.9200);">0 gal</span>
<div class="b sq" style="left:1541px;top:748.4px;background:#35a8e8"></div>
<span class="t" style="top:749px;font-size:14px;color:#111;left:1563px;transform:scaleX(0.9200);">40239</span>
<span class="t" style="top:749px;font-size:14px;color:#111;right:174.6px;transform-origin:100% 0;transform:scaleX(0.9200);">0 gal</span>
<div class="b sq" style="left:1541px;top:778.4px;background:#0b2fff"></div>
<span class="t" style="top:779px;font-size:14px;color:#111;left:1563px;transform:scaleX(0.9200);">38TJ</span>
<span class="t" style="top:779px;font-size:14px;color:#111;right:174.6px;transform-origin:100% 0;transform:scaleX(0.9200);">0 gal</span>
<div class="b sq" style="left:1541px;top:808.4px;background:#9b00d3"></div>
<span class="t" style="top:809px;font-size:14px;color:#111;left:1563px;transform:scaleX(0.9200);">0051</span>
<span class="t" style="top:809px;font-size:14px;color:#111;right:174.6px;transform-origin:100% 0;transform:scaleX(0.9200);">0 gal</span>
<div class="b sq" style="left:1541px;top:838.4px;background:#f70ad6"></div>
<span class="t" style="top:839px;font-size:14px;color:#111;left:1563px;transform:scaleX(0.9200);">0063</span>
<span class="t" style="top:839px;font-size:14px;color:#111;right:174.6px;transform-origin:100% 0;transform:scaleX(0.9200);">0 gal</span>
<div class="b sq" style="left:1541px;top:868.4px;background:#f50a69"></div>
<span class="t" style="top:869px;font-size:14px;color:#111;left:1563px;transform:scaleX(0.9200);">0071</span>
<span class="t" style="top:869px;font-size:14px;color:#111;right:174.6px;transform-origin:100% 0;transform:scaleX(0.9200);">0 gal</span>
<div class="b" style="left:1905px;top:83px;width:3px;height:791px;background:#bcbcbc;border-radius:2px"></div>
<div class="b" style="left:1905px;top:83px;width:3px;height:471px;background:#909090;border-radius:2px"></div>
</main>
<footer id="ft">
<svg class="b" style="left:0;top:878px" width="1910" height="27" viewBox="0 878 1910 27"><path fill="#fff" fill-rule="evenodd" d="M0 884.800h16v13.200H0zM6 886.200v10.700h8v-10.700z"/><g fill="#fff"><rect x="31" y="884.800" width="4.300" height="3.400"/><rect x="36" y="884.800" width="4.100" height="3.400"/><rect x="40.900" y="884.800" width="4.200" height="3.400"/><rect x="31" y="889" width="4.300" height="4.100"/><rect x="36" y="889" width="4.100" height="4.100"/><rect x="40.900" y="889" width="4.200" height="4.100"/><rect x="31" y="893.900" width="4.300" height="4.100"/><rect x="36" y="893.900" width="4.100" height="4.100"/><rect x="40.900" y="893.900" width="4.200" height="4.100"/></g><g fill="#cecece"><rect x="1659.400" y="884.900" width="16.800" height="13"/><rect x="1697.500" y="884.900" width="16" height="11.100"/><path d="M1710.500 890.500l3.500-3v2h5v3h-5v2z"/><path d="M1708.500 893.800h5v-2.300l4 3.300-4 3.300v-2.300h-5z"/><rect x="1737.100" y="884.900" width="15.500" height="13"/></g><g fill="#b4b4b4"><rect x="1661" y="886.200" width="13.500" height="1.800"/><rect x="1663.500" y="891.200" width="8.500" height=".8"/><rect x="1663.500" y="894" width="4.500" height=".9"/><path d="M1699.800 886.500l5.500 5 5.500-5 .5.500-6 5.700-6-5.700z"/><circle cx="1741" cy="888.500" r="1.100"/><path d="M1738.800 896.600l2.500-3 1.700 1.600 4.600-5.800 3.400 7.200z"/><path d="M1711 891.800l3 3.200" stroke="#b4b4b4" stroke-width=".8"/></g><rect x="1774.200" y="886.200" width="19.300" height="10.900" fill="#fff"/><rect x="1783" y="886.200" width="1" height="10.900" fill="#c9c9c9"/><g fill="#777"><rect x="1776.800" y="888.400" width="4.200" height=".9" fill="#cfcfcf"/><rect x="1776.800" y="891.200" width="4.200" height=".9" fill="#bdbdbd"/><rect x="1776.800" y="894" width="2.500" height="1"/></g></svg>
<span class="t" style="top:887px;font-size:11px;color:#fff;font-weight:bold;left:783.5px;transform:scaleX(0.9678);">© Dump Truck Dispatcher</span>
<span class="t" style="top:887px;font-size:11px;color:#fff;font-weight:bold;left:1816px;">10:40:05 am (-04)</span>
</footer>
</body>
</html>
